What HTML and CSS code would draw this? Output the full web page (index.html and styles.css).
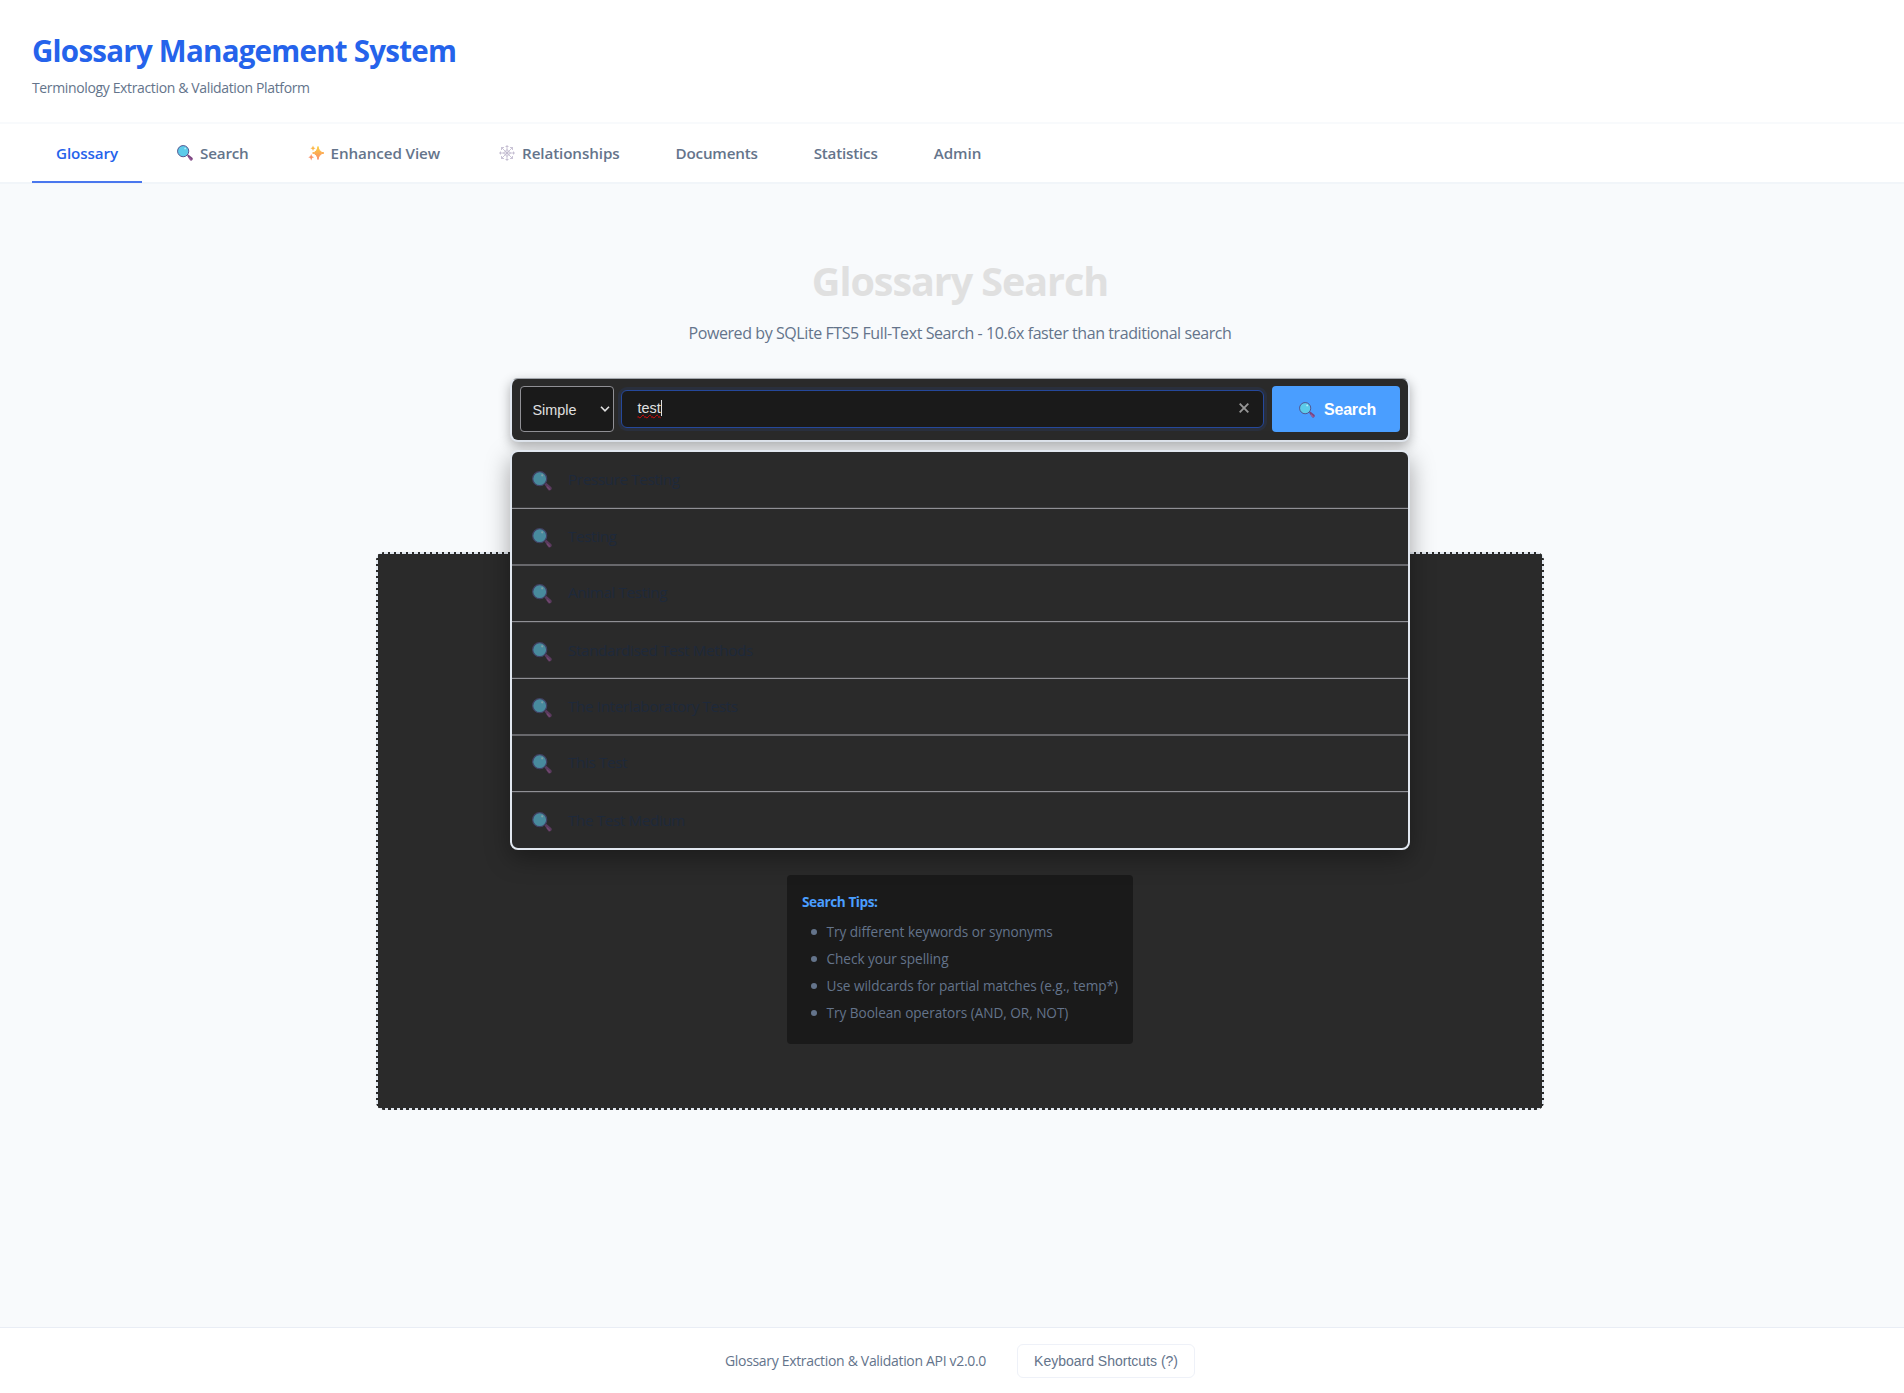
FILE: index.html
```html
<!DOCTYPE html>
<html lang="en">
<head>
<meta charset="utf-8">
<title>Glossary Management System</title>
<link rel="stylesheet" href="styles.css">
</head>
<body>
<svg class="defs" width="0" height="0">
  <symbol id="lens" viewBox="0 0 20 20">
    <path d="M12.600 13.400l1.600-1.600 5 4.200c1.700 1.700-.8 4.700-2.800 3.200z" fill="#7b4580"/>
    <path d="M15.300 16l2.300 2.200" stroke="#a45ea0" stroke-width="1.300" stroke-linecap="round"/>
    <circle cx="7.700" cy="7.700" r="7" fill="#5ccbea" stroke="#51538d" stroke-width="1.200"/>
    <circle cx="10.200" cy="4.300" r="1.100" fill="#b9edf8"/>
  </symbol>
</svg>
<div class="page">
  <header class="header">
    <h1 class="brand">Glossary Management System</h1>
    <p class="tagline">Terminology Extraction &amp; Validation Platform</p>
  </header>
  <nav class="nav">
    <a class="tab active">Glossary</a>
    <a class="tab t-search"><svg class="ico"><use href="#lens"/></svg>Search</a>
    <a class="tab"><svg class="ico" viewBox="0 0 16 16"><defs><linearGradient id="sp" x1="0" y1="0" x2="0" y2="1"><stop offset="0" stop-color="#fbd03c"/><stop offset="1" stop-color="#fb8a6c"/></linearGradient></defs><path d="M10 1.500Q10.800 7 16 8Q10.800 9 10 14.500Q9.200 9 4.500 8Q9.200 7 10 1.500z" fill="url(#sp)" stroke="url(#sp)"/><path d="M5 .5l.8 2 1.800.7-1.800.7L5 6l-.8-2-1.800-.8 1.800-.7z" fill="#fbb648"/><path d="M3.200 9l.9 2.300 2 .9-2 .9-.9 2.400-.9-2.400-2-.9 2-.9z" fill="#fb9468"/></svg>Enhanced View</a>
    <a class="tab"><svg class="ico" viewBox="0 0 16 16"><path d="M8 0v16M0 8h16M2.500 2.500l11 11M13.500 2.500l-11 11M6.500 1.500h3M6.500 14.500h3M1.500 6.500v3M14.500 6.500v3M2.500 5V2.500H5M11 2.500h2.500V5M13.500 11v2.500H11M5 13.500H2.500V11M8 4.500l3.500 3.500L8 11.500 4.500 8z" fill="none" stroke="#bdb5cc" stroke-width=".8"/></svg>Relationships</a>
    <a class="tab t-wide">Documents</a>
    <a class="tab t-wide">Statistics</a>
    <a class="tab t-admin">Admin</a>
  </nav>
  <main class="main">
    <h2 class="title">Glossary Search</h2>
    <p class="lead">Powered by SQLite FTS5 Full-Text Search - 10.6x faster than traditional search</p>
    <div class="search">
      <div class="bar">
        <div class="select">Simple<svg class="chev" viewBox="0 0 10 6"><path d="M1 .8l4 4 4-4" fill="none" stroke="#e0e0e0" stroke-width="1.600"/></svg></div>
        <div class="field"><span class="typed">test</span><i class="caret"></i><svg class="clear" viewBox="0 0 10 10"><path d="M.7.7l8.600 8.600M9.300.7L.7 9.300" stroke="#969696" stroke-width="1.900"/></svg></div>
        <div class="go"><svg class="ico"><use href="#lens"/></svg>Search</div>
      </div>
      <div class="menu">
        <div class="item low"><svg><use href="#lens"/></svg>Pressure Testing</div>
        <div class="item mid"><svg><use href="#lens"/></svg>Testing</div>
        <div class="item high"><svg><use href="#lens"/></svg>Animal Testing</div>
        <div class="item low short"><svg><use href="#lens"/></svg>Standardised Test Methods</div>
        <div class="item mid"><svg><use href="#lens"/></svg>The Interlaboratory Tests</div>
        <div class="item high"><svg><use href="#lens"/></svg>This Test</div>
        <div class="item last"><svg><use href="#lens"/></svg>The Test Medium</div>
      </div>
    </div>
    <section class="empty">
      <div class="tips">
        <strong>Search Tips:</strong>
        <ul>
          <li>Try different keywords or synonyms</li>
          <li>Check your spelling</li>
          <li>Use wildcards for partial matches (e.g., temp*)</li>
          <li>Try Boolean operators (AND, OR, NOT)</li>
        </ul>
      </div>
    </section>
  </main>
  <footer class="footer">
    <span class="ver">Glossary Extraction &amp; Validation API v2.0.0</span>
    <button class="keys">Keyboard Shortcuts (?)</button>
  </footer>
</div>
</body>
</html>
```
FILE: styles.css
```css
* { box-sizing: border-box; margin: 0; padding: 0; }
html { overflow: hidden; }
body {
  width: 1904px;
  height: 1393px;
  overflow: hidden;
  background: #f8fafc;
  color: #64748b;
  font-family: "Open Sans", "Noto Sans", sans-serif;
}
.defs { position: absolute; }
.page { width: 1920px; height: 1393px; display: flex; flex-direction: column; }

/* Header */
.header { height: 124px; background: #fff; border-bottom: 2px solid #f8fafc; padding: 29px 32px 0; }
.brand { font-size: 29.5px; line-height: 43px; font-weight: 700; color: #2563eb; letter-spacing: -.75px; }
.tagline { font-size: 14px; line-height: 22px; margin-top: 5px; letter-spacing: -.36px; }

/* Tabs */
.nav { height: 60px; background: #fff; border-bottom: 2px solid #f1f5f9; padding: 0 32px; display: flex; gap: 8px; }
.tab {
  height: 59px;
  padding: 0 24px 2px;
  display: flex;
  align-items: center;
  font-size: 15.2px;
  font-weight: 600;
  letter-spacing: -.1px;
  white-space: nowrap;
}
.tab.active { color: #2563eb; border-bottom: 2px solid #4a77ee; padding-bottom: 0; }
.t-search { letter-spacing: -.18px; }
.t-wide { letter-spacing: -.2px; }
.t-admin { letter-spacing: 0; }
.ico { width: 16px; height: 16px; margin: 0 7px 0 3px; flex: none; }

/* Intro */
.main { flex: 1; display: flex; flex-direction: column; align-items: center; padding-top: 71px; }
.title { font-size: 39.5px; line-height: 52px; color: #e0e0e0; font-weight: 700; letter-spacing: -1.05px; }
.lead { font-size: 16px; line-height: 24px; margin-top: 14px; letter-spacing: -.42px; }

/* Search bar */
.search { position: relative; z-index: 1; width: 900px; margin-top: 33px; }
.bar {
  height: 64px;
  display: flex;
  padding: 7px 8px 8px;
  border: 2px solid #e2e8f0;
  border-top: 1px solid #a3a7ad;
  border-radius: 8px;
  background: #2a2a2a;
  box-shadow: 0 4px 12px rgba(0,0,0,.3);
  font-family: "Liberation Sans", Arial, sans-serif;
  font-size: 14.4px;
  color: #e0e0e0;
}
.select {
  width: 94px;
  height: 46px;
  display: flex;
  align-items: center;
  justify-content: space-between;
  padding: 1px 3px 0 11.500px;
  background: #1a1a1a;
  border: 1px solid #909095;
  border-radius: 4px;
}
.chev { width: 10px; height: 6px; margin-top: -1px; }
.field {
  width: 643px;
  height: 38px;
  margin: 4px 8px 0 7px;
  display: flex;
  align-items: center;
  padding: 0 14px 2px 15.500px;
  background: #1a1a1a;
  border: 1px solid #25489b;
  border-radius: 6px;
  box-shadow: 0 0 0 3px rgba(37,99,235,.1);
}
.typed { text-decoration: underline wavy #e00808 1.200px; text-underline-offset: 1px; text-decoration-skip-ink: none; }
.caret { width: 1px; height: 16px; background: #e0e0e0; }
.clear { width: 10px; height: 10px; margin-left: auto; }
.go {
  width: 128px;
  height: 46px;
  display: flex;
  align-items: center;
  padding: 2px 0 0 24px;
  background: #4a9eff;
  border-radius: 4px;
  color: #fff;
  font-size: 16px;
  font-weight: 700;
  letter-spacing: -.2px;
}
.go .ico { margin-right: 9px; }

/* Suggestions */
.menu {
  position: absolute;
  top: 72px;
  left: 0;
  width: 900px;
  height: 400px;
  border: 2px solid #e2e8f0;
  border-radius: 8px;
  background: #2a2a2a;
  box-shadow: 0 8px 24px rgba(0,0,0,.35);
  overflow: hidden;
}
.item {
  height: 57px;
  display: flex;
  align-items: center;
  gap: 16px;
  padding: 0 0 2px 20px;
  font-size: 15.2px;
  letter-spacing: -.35px;
  color: #1e293b;
}
.item svg { width: 20px; height: 20px; opacity: .6; margin-top: 4px; }
.low { border-bottom: 1px solid #909095; box-shadow: inset 0 -1px #3c3c3e; }
.mid { border-bottom: 1px solid #68686c; box-shadow: inset 0 -1px #68686c; }
.high { border-bottom: 1px solid #3c3c3e; box-shadow: inset 0 -1px #909095; padding-bottom: 4px; }
.short { height: 56px; }
.last { height: 55px; }

/* Empty state */
.empty {
  width: 1168px;
  height: 558px;
  margin-top: 110px;
  padding-top: 323px;
  border-radius: 8px;
  background:
    repeating-linear-gradient(90deg, #2a2a2a 0 2px, #e2e8f0 2px 6px) 0 0 / 100% 2px no-repeat,
    repeating-linear-gradient(90deg, #2a2a2a 0 3px, #e2e8f0 3px 6px) 0 100% / 100% 2px no-repeat,
    repeating-linear-gradient(#2a2a2a 0 2px, #e2e8f0 2px 6px) 0 0 / 2px 100% no-repeat,
    repeating-linear-gradient(#2a2a2a 0 2px, #e2e8f0 2px 6px) 100% 0 / 2px 100% no-repeat,
    #2a2a2a;
}
.tips { width: 346px; height: 169px; margin: 0 auto; background: #1a1a1a; border-radius: 4px; padding: 16px 15px; font-size: 13.6px; }
.tips strong { display: block; line-height: 22px; color: #4a9eff; letter-spacing: -.42px; }
.tips ul { list-style: none; margin-top: 5px; }
.tips li { display: flex; align-items: center; line-height: 27px; letter-spacing: -.03px; white-space: nowrap; }
.tips li::before { content: ""; flex: none; width: 6px; height: 6px; margin: 1px 9.500px 0 9px; border-radius: 50%; background: #64748b; }

/* Footer */
.footer { height: 66px; background: #fff; border-top: 1px solid #e9edf5; display: flex; justify-content: center; gap: 31px; font-size: 14px; }
.ver { line-height: 22px; margin-top: 22px; letter-spacing: -.32px; }
.keys {
  width: 178px;
  height: 34px;
  margin-top: 16px;
  background: #fff;
  border: 1px solid #eef1f8;
  border-radius: 6px;
  color: #64748b;
  font: 14px/30px "Liberation Sans", Arial, sans-serif;
}
```
